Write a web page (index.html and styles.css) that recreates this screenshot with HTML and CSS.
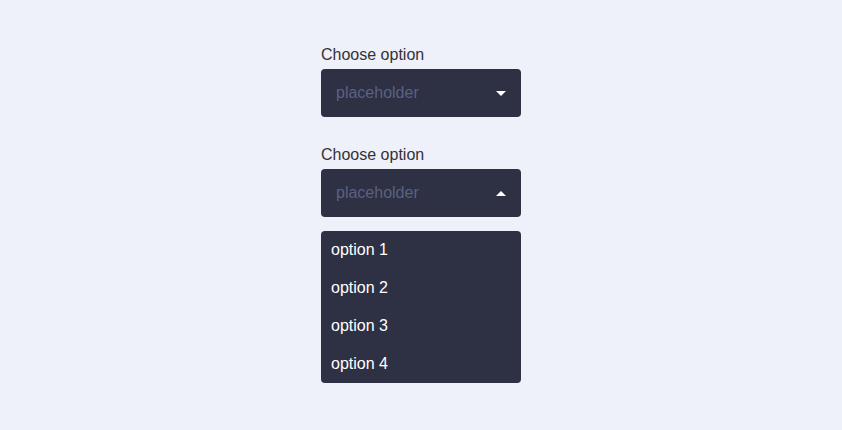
FILE: index.html
```html
<!DOCTYPE html>
<html>
<head>
<meta charset="utf-8">
<link rel="stylesheet" href="styles.css">
</head>
<body>
<div class="wrap">
  <div class="field">
    <div class="label">Choose option</div>
    <div class="select">
      <span class="placeholder">placeholder</span>
      <span class="arrow down"></span>
    </div>
  </div>
  <div class="field">
    <div class="label">Choose option</div>
    <div class="select">
      <span class="placeholder">placeholder</span>
      <span class="arrow up"></span>
    </div>
    <ul class="menu">
      <li>option 1</li>
      <li>option 2</li>
      <li>option 3</li>
      <li>option 4</li>
    </ul>
  </div>
</div>
</body>
</html>
```
FILE: styles.css
```css
html, body {
  margin: 0;
  padding: 0;
  background: #eef0fa;
  font-family: "Liberation Sans", Arial, sans-serif;
  font-size: 16px;
}
.wrap {
  width: 200px;
  margin: 0 auto;
  padding-top: 46px;
  display: flex;
  flex-direction: column;
  gap: 29px;
}
.label {
  color: #333333;
  line-height: 18px;
  margin-bottom: 5px;
}
.select {
  height: 48px;
  box-sizing: border-box;
  background: #2e3044;
  border-radius: 4px;
  display: flex;
  align-items: center;
  justify-content: space-between;
  padding: 0 15px;
}
.placeholder {
  color: #5c6182;
}
.arrow {
  width: 0;
  height: 0;
  border-left: 5px solid transparent;
  border-right: 5px solid transparent;
}
.arrow.down {
  border-top: 5px solid #ffffff;
}
.arrow.up {
  border-bottom: 5px solid #ffffff;
}
.menu {
  list-style: none;
  margin: 14px 0 0;
  padding: 0;
  background: #2e3044;
  border-radius: 4px;
}
.menu li {
  height: 38px;
  line-height: 38px;
  padding: 0 10px;
  color: #ffffff;
}
```
